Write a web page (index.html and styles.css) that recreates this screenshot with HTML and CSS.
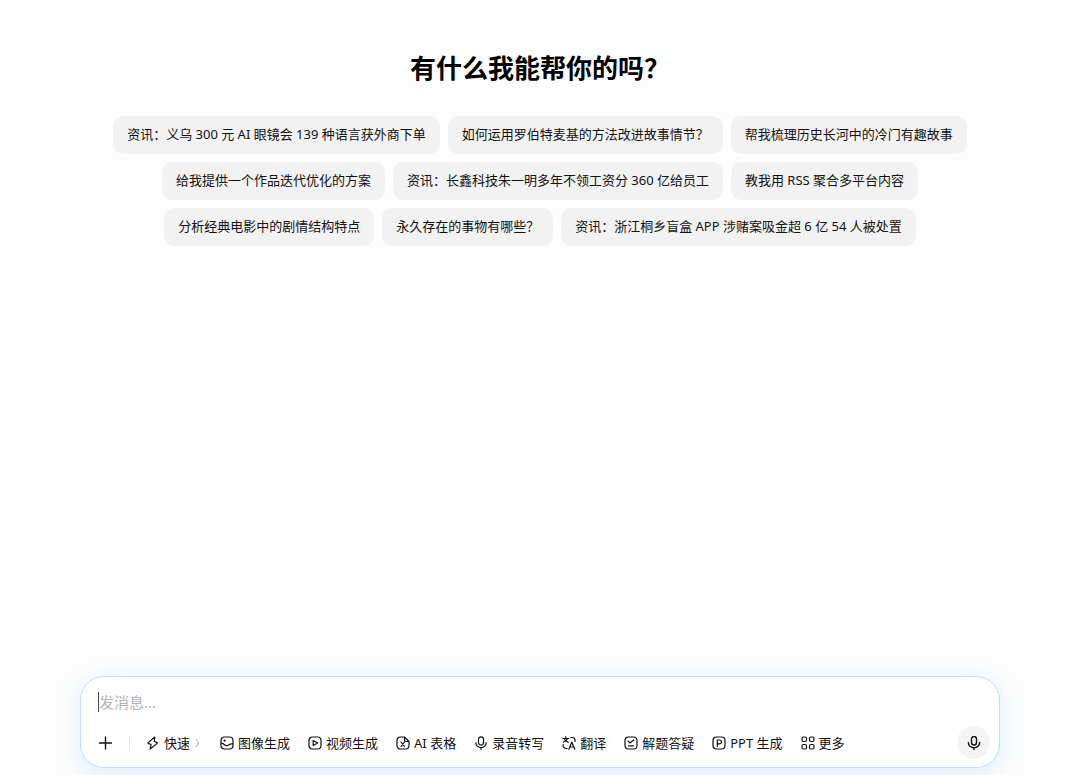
FILE: index.html
```html
<!DOCTYPE html>
<html lang="zh-CN">
<head>
    <meta charset="UTF-8">
    <meta name="viewport" content="width=device-width, initial-scale=1.0">
    <title>新对话</title>
    <link rel="stylesheet" href="styles.css">
</head>
<body>
    <main class="welcome">
        <h1>有什么我能帮你的吗？</h1>
        <div class="suggestions">
            <div class="row">
                <button class="chip">资讯：义乌 300 元 AI 眼镜会 139 种语言获外商下单</button>
                <button class="chip">如何运用罗伯特麦基的方法改进故事情节？</button>
                <button class="chip">帮我梳理历史长河中的冷门有趣故事</button>
            </div>
            <div class="row">
                <button class="chip">给我提供一个作品迭代优化的方案</button>
                <button class="chip">资讯：长鑫科技朱一明多年不领工资分 360 亿给员工</button>
                <button class="chip">教我用 RSS 聚合多平台内容</button>
            </div>
            <div class="row">
                <button class="chip">分析经典电影中的剧情结构特点</button>
                <button class="chip">永久存在的事物有哪些？</button>
                <button class="chip">资讯：浙江桐乡盲盒 APP 涉赌案吸金超 6 亿 54 人被处置</button>
            </div>
        </div>
    </main>

    <form class="composer">
        <input class="message" type="text" placeholder="发消息..." aria-label="发消息">
        <div class="toolbar">
            <button type="button" class="add" aria-label="添加">
                <svg class="icon" viewBox="0 0 14 14"><path d="M7.500 1v12M1.500 7h12"/></svg>
            </button>
            <span class="divider"></span>
            <div class="tools">
                <button type="button" class="tool">
                    <svg class="icon" viewBox="0 0 14 14"><path d="M8.800 1 2.200 6.600c-.4.400-.3.800.2 1l2.600.7L4.200 13l6.900-5.600c.5-.4.400-.9-.1-1.100L8.300 5.500z"/></svg>
                    快速
                    <svg class="arrow" viewBox="0 0 8 10"><path d="m2 1 3 4-3 4"/></svg>
                </button>
                <button type="button" class="tool">
                    <svg class="icon" viewBox="0 0 14 14"><rect x="1" y="1" width="12" height="12" rx="3.500"/><path d="m1.300 7.500c2.500-.6 3 2.200 5.200 2.200 2 0 2.800-2.200 6.200-1.700"/><circle cx="4.600" cy="4.600" r=".5"/></svg>
                    图像生成
                </button>
                <button type="button" class="tool">
                    <svg class="icon" viewBox="0 0 14 14"><rect x="1" y="1" width="12" height="12" rx="3.500"/><path d="M5.200 4.400v5.200L9.700 7z"/></svg>
                    视频生成
                </button>
                <button type="button" class="tool">
                    <svg class="icon" viewBox="0 0 14 14"><path d="M8.500 1h-4A3.500 3.500 0 0 0 1 4.500v5A3.500 3.500 0 0 0 4.500 13h5A3.500 3.500 0 0 0 13 9.500v-4zM8.500 1v3A1.500 1.500 0 0 0 10 5.500h3M5 6l3.500 4.500M8.500 6 5 10.500"/></svg>
                    AI 表格
                </button>
                <button type="button" class="tool">
                    <svg class="icon" viewBox="0 0 14 14"><rect x="4.500" y=".8" width="5" height="8.200" rx="2.500"/><path d="M1.800 6.500a5.200 5.200 0 0 0 10.400 0M7 11.700v1.800"/></svg>
                    录音转写
                </button>
                <button type="button" class="tool">
                    <svg class="icon" viewBox="0 0 14 14"><path d="M.8 2.500h6M3.800.8v1.700M1.200 6.300c2.200-.7 3.800-2 4.400-3.800M2 2.500c.7 1.800 2.200 3.200 4.300 3.800M1.200 8.500v1.200A2.800 2.800 0 0 0 4 12.500h1M8.700 1.500h1.500A2.800 2.800 0 0 1 13 4.300v1M6.800 13.200l3-7 3 7M7.800 11h4"/></svg>
                    翻译
                </button>
                <button type="button" class="tool">
                    <svg class="icon" viewBox="0 0 14 14"><rect x="1" y="1" width="12" height="12" rx="3.500"/><path d="m4.200 5.200 1.800 1.700L9.800 4M4.500 9.800h5"/></svg>
                    解题答疑
                </button>
                <button type="button" class="tool">
                    <svg class="icon" viewBox="0 0 14 14"><rect x="1" y="1" width="12" height="12" rx="3.500"/><path d="M5.300 10.500V4h2.200a1.900 1.900 0 0 1 0 3.900H5.300"/></svg>
                    PPT 生成
                </button>
                <button type="button" class="tool">
                    <svg class="icon" viewBox="0 0 14 14"><rect x="1" y="1" width="4.500" height="4.500" rx="1.500"/><rect x="8.500" y="1" width="4.500" height="4.500" rx="1.500"/><rect x="1" y="8.500" width="4.500" height="4.500" rx="1.500"/><rect x="8.500" y="8.500" width="4.500" height="4.500" rx="1.500"/></svg>
                    更多
                </button>
            </div>
            <button type="button" class="voice" aria-label="语音输入">
                <svg class="icon" viewBox="0 0 14 14"><rect x="4.500" y=".5" width="5" height="8.500" rx="2.500"/><path d="M1.300 6.500a5.700 5.200 0 0 0 11.400 0M7 11.700V14"/></svg>
            </button>
        </div>
    </form>
</body>
</html>
```

FILE: styles.css
```css
* {
    box-sizing: border-box;
}
body {
    display: flex;
    flex-direction: column;
    justify-content: space-between;
    min-height: 100vh;
    margin: 0;
    background: #fdfdfd;
    color: #111;
    font-family: "Noto Sans", "Noto Sans CJK SC", sans-serif;
    font-size: 13px;
    line-height: 20px;
}
button, input {
    padding: 0;
    border: 0;
    background: none;
    color: inherit;
    font: inherit;
}
button {
    cursor: pointer;
}
.welcome {
    padding: 50px 20px 20px;
}
h1 {
    margin: 0 0 30px;
    color: #000;
    font-size: 26px;
    font-weight: 700;
    line-height: 36px;
    text-align: center;
}
.suggestions {
    display: flex;
    flex-direction: column;
    gap: 8px;
}
.row {
    display: flex;
    flex-wrap: wrap;
    justify-content: center;
    gap: 8px;
}
.chip {
    padding: 8px 14px 10px;
    border-radius: 10px;
    background: #f2f2f2;
}
.chip:hover {
    background: #eaeaea;
}
.composer {
    width: calc(100% - 160px);
    max-width: 920px;
    margin: 0 auto 7px;
    padding: 15px 9px 8px 17px;
    border: 1px solid #c4dbfb;
    border-radius: 24px;
    background: #fff;
    box-shadow: 0 6px 24px rgba(80, 170, 250, 0.2);
}
.message {
    display: block;
    width: 100%;
    height: 20px;
    margin-bottom: 14px;
    border-left: 1px solid #444;
    outline: none;
    font-size: 15px;
}
.message::placeholder {
    color: #b4b4b4;
    opacity: 1;
}
.toolbar {
    display: flex;
    align-items: center;
}
.icon {
    width: 14px;
    height: 14px;
    flex: none;
    fill: none;
    stroke: currentColor;
    stroke-width: 1.4;
    stroke-linecap: round;
    stroke-linejoin: round;
}
.tool .icon {
    stroke-width: 1.2;
}
.add {
    display: flex;
}
.divider {
    width: 1px;
    height: 14px;
    margin: 0 16px 0 17px;
    background: #e4e4e4;
}
.tools {
    display: flex;
    flex: 1;
    gap: 18px;
}
.tool {
    display: flex;
    align-items: center;
    gap: 4px;
    white-space: nowrap;
}
.arrow {
    width: 8px;
    height: 10px;
    fill: none;
    stroke: #aaa;
}
.voice {
    display: flex;
    align-items: center;
    justify-content: center;
    width: 33px;
    height: 33px;
    border-radius: 50%;
    background: #f4f4f4;
}
```
